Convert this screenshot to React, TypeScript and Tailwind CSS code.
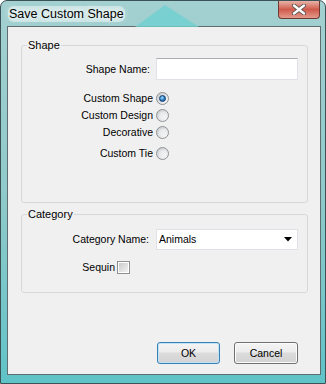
// Vista-style "Save Custom Shape" dialog
const FONT = { fontFamily: '"Liberation Sans", Arial, sans-serif' };

function Radio({ checked = false }: { checked?: boolean }) {
  return (
    <span className="flex h-[13px] w-[13px] shrink-0 items-center justify-center rounded-full border border-[#8d9094] bg-gradient-to-br from-[#c9cbce] to-[#fbfbfb]">
      <span
        className={
          checked
            ? "h-[7px] w-[7px] rounded-full border border-[#0d3f70] bg-[radial-gradient(circle_at_40%_35%,#a9ddff,#2a7cc4_55%,#0b3b6d)]"
            : "h-[7px] w-[7px] rounded-full bg-gradient-to-br from-[#e4e5e7] to-[#f6f6f6]"
        }
      />
    </span>
  );
}

function Group({ title, className, children }: { title: string; className: string; children: React.ReactNode }) {
  return (
    <div className={`relative ml-[13px] w-[287px] rounded-[3px] border border-[#d5d9dc] ${className}`}>
      <span className="absolute left-[5px] top-[-8px] bg-[#f0f0f0] px-[1px] text-[11px] leading-[14px] text-black">
        {title}
      </span>
      {children}
    </div>
  );
}

export default function App() {
  return (
    <div className="h-[384px] w-[326px] bg-white" style={FONT}>
      <div className="relative flex h-full flex-col rounded-t-[7px] border border-[#3d5256] bg-gradient-to-b from-[#a3d0d0] via-[#90caca] to-[#5fc3c7] pb-[8px] pl-[6px] pr-[4px]">
        {/* title bar */}
        <svg className="absolute left-[134px] top-[4px]" width="64" height="22" viewBox="0 0 64 22">
          <polygon points="30,0 0,22 64,22" fill="#6fcfcf" opacity="0.8" />
        </svg>
        <div className="relative flex h-[25px] items-center pl-[1px]">
          <span className="rounded-[6px] bg-[#dcecec]/70 px-[1px] text-[12.5px] leading-[16px] text-black [text-shadow:0_0_6px_#ffffff,0_0_6px_#ffffff]">
            Save Custom Shape
          </span>
        </div>
        <div className="absolute right-[5px] top-0 flex h-[18px] w-[42px] items-center justify-center rounded-b-[4px] border border-t-0 border-[#6d3a33] bg-gradient-to-b from-[#e6b3a8] via-[#cf5a4c] to-[#e39a8c]">
          <svg width="16" height="11" viewBox="0 0 16 11">
            <path d="M3 1.5 L13 9.5 M13 1.5 L3 9.5" stroke="#4a4a4a" strokeWidth="4" strokeLinecap="round" />
            <path d="M3 1.5 L13 9.5 M13 1.5 L3 9.5" stroke="#ffffff" strokeWidth="2.4" strokeLinecap="round" />
          </svg>
        </div>

        {/* client area */}
        <div className="flex flex-1 flex-col border border-[#5f6d70] bg-[#f0f0f0] text-[10.5px] leading-[13px] text-black">
          <Group title="Shape" className="mt-[18px] h-[158px] pt-[12px]">
            <div className="flex items-center">
              <span className="w-[128px] text-right">Shape Name:</span>
              <div className="ml-[6px] h-[22px] w-[142px] border border-[#dfe2e6] border-t-[#abadb3] bg-white" />
            </div>
            <div className="mt-[10px] flex h-[17px] items-center">
              <span className="w-[131px] text-right">Custom Shape</span>
              <span className="ml-[3px]"><Radio checked /></span>
            </div>
            <div className="flex h-[17px] items-center">
              <span className="w-[131px] text-right">Custom Design</span>
              <span className="ml-[3px]"><Radio /></span>
            </div>
            <div className="flex h-[17px] items-center">
              <span className="w-[131px] text-right">Decorative</span>
              <span className="ml-[3px]"><Radio /></span>
            </div>
            <div className="mt-[4px] flex h-[17px] items-center">
              <span className="w-[131px] text-right">Custom Tie</span>
              <span className="ml-[3px]"><Radio /></span>
            </div>
          </Group>

          <Group title="Category" className="mt-[11px] h-[79px] pt-[14px]">
            <div className="flex items-center">
              <span className="w-[127px] text-right">Category Name:</span>
              <div className="ml-[7px] flex h-[21px] w-[142px] items-center justify-between border border-[#dfe2e6] bg-white pl-[2px] pr-[5px]">
                <span>Animals</span>
                <svg width="8" height="5" viewBox="0 0 8 5">
                  <polygon points="0,0 8,0 4,4.5" fill="#000000" />
                </svg>
              </div>
            </div>
            <div className="mt-[11px] flex items-center">
              <span className="w-[93px] text-right">Sequin</span>
              <span className="ml-[2px] flex h-[13px] w-[13px] items-center justify-center border border-[#8f8f8f] bg-white">
                <span className="h-[9px] w-[9px] bg-gradient-to-br from-[#cbcbcb] to-[#f1f1f1]" />
              </span>
            </div>
          </Group>

          <div className="mt-[49px] flex justify-end gap-[14px] pr-[22px]">
            <button className="flex h-[22px] w-[63px] items-center justify-center rounded-[3px] border border-[#3c7fb1] bg-[linear-gradient(#f4f4f4_0%,#ececec_45%,#dcdcdc_50%,#d3d3d3_100%)] shadow-[inset_0_0_0_1px_#bfe4f9]">
              OK
            </button>
            <button className="flex h-[22px] w-[64px] items-center justify-center rounded-[3px] border border-[#707070] bg-[linear-gradient(#f4f4f4_0%,#ececec_45%,#dcdcdc_50%,#d3d3d3_100%)] shadow-[inset_0_0_0_1px_#fcfcfc]">
              Cancel
            </button>
          </div>
        </div>
      </div>
    </div>
  );
}
